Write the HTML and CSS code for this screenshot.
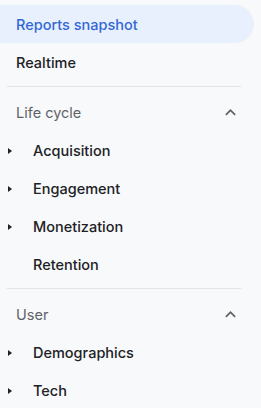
FILE: index.html
```html
<!DOCTYPE html>
<html>
<head>
<meta charset="utf-8">
<link rel="stylesheet" href="styles.css">
</head>
<body>
<nav class="nav">
  <div class="row active">Reports snapshot</div>
  <div class="row">Realtime</div>
  <div class="divider"></div>
  <div class="row header"><span>Life cycle</span>
    <svg class="chev" viewBox="0 0 24 24"><path d="M12 8l-6 6 1.41 1.41L12 10.83l4.59 4.58L18 14z"/></svg>
  </div>
  <div class="row item"><span class="tri"></span>Acquisition</div>
  <div class="row item"><span class="tri"></span>Engagement</div>
  <div class="row item"><span class="tri"></span>Monetization</div>
  <div class="row item"><span class="tri none"></span>Retention</div>
  <div class="divider"></div>
  <div class="row header"><span>User</span>
    <svg class="chev" viewBox="0 0 24 24"><path d="M12 8l-6 6 1.41 1.41L12 10.83l4.59 4.58L18 14z"/></svg>
  </div>
  <div class="row item"><span class="tri"></span>Demographics</div>
  <div class="row item"><span class="tri"></span>Tech</div>
</nav>
</body>
</html>
```
FILE: styles.css
```css
html, body {
  margin: 0;
  padding: 0;
  background: #f8f9fb;
}
.nav {
  width: 261px;
  padding-top: 5px;
  font-family: Inter, Roboto, sans-serif;
  font-size: 14.5px;
  font-weight: 500;
  color: #202124;
}
.row {
  height: 38px;
  display: flex;
  align-items: center;
  padding-left: 16px;
  padding-top: 1px;
  box-sizing: border-box;
}
.active {
  width: 254px;
  background: #e8f0fe;
  color: #3367d6;
  border-radius: 0 19px 19px 0;
}
.divider {
  height: 1px;
  background: #e3e5e8;
  margin: 5px 20px 6px 7px;
}
.header {
  font-weight: 400;
  color: #5f6368;
  justify-content: space-between;
  padding-right: 20px;
}
.chev {
  width: 21px;
  height: 21px;
  fill: #5f6368;
}
.item {
  padding-left: 8px;
}
.tri {
  width: 0;
  height: 0;
  border-top: 3px solid transparent;
  border-bottom: 3px solid transparent;
  border-left: 4px solid #202124;
  margin-right: 21px;
}
.tri.none {
  border-left-color: transparent;
}
```
